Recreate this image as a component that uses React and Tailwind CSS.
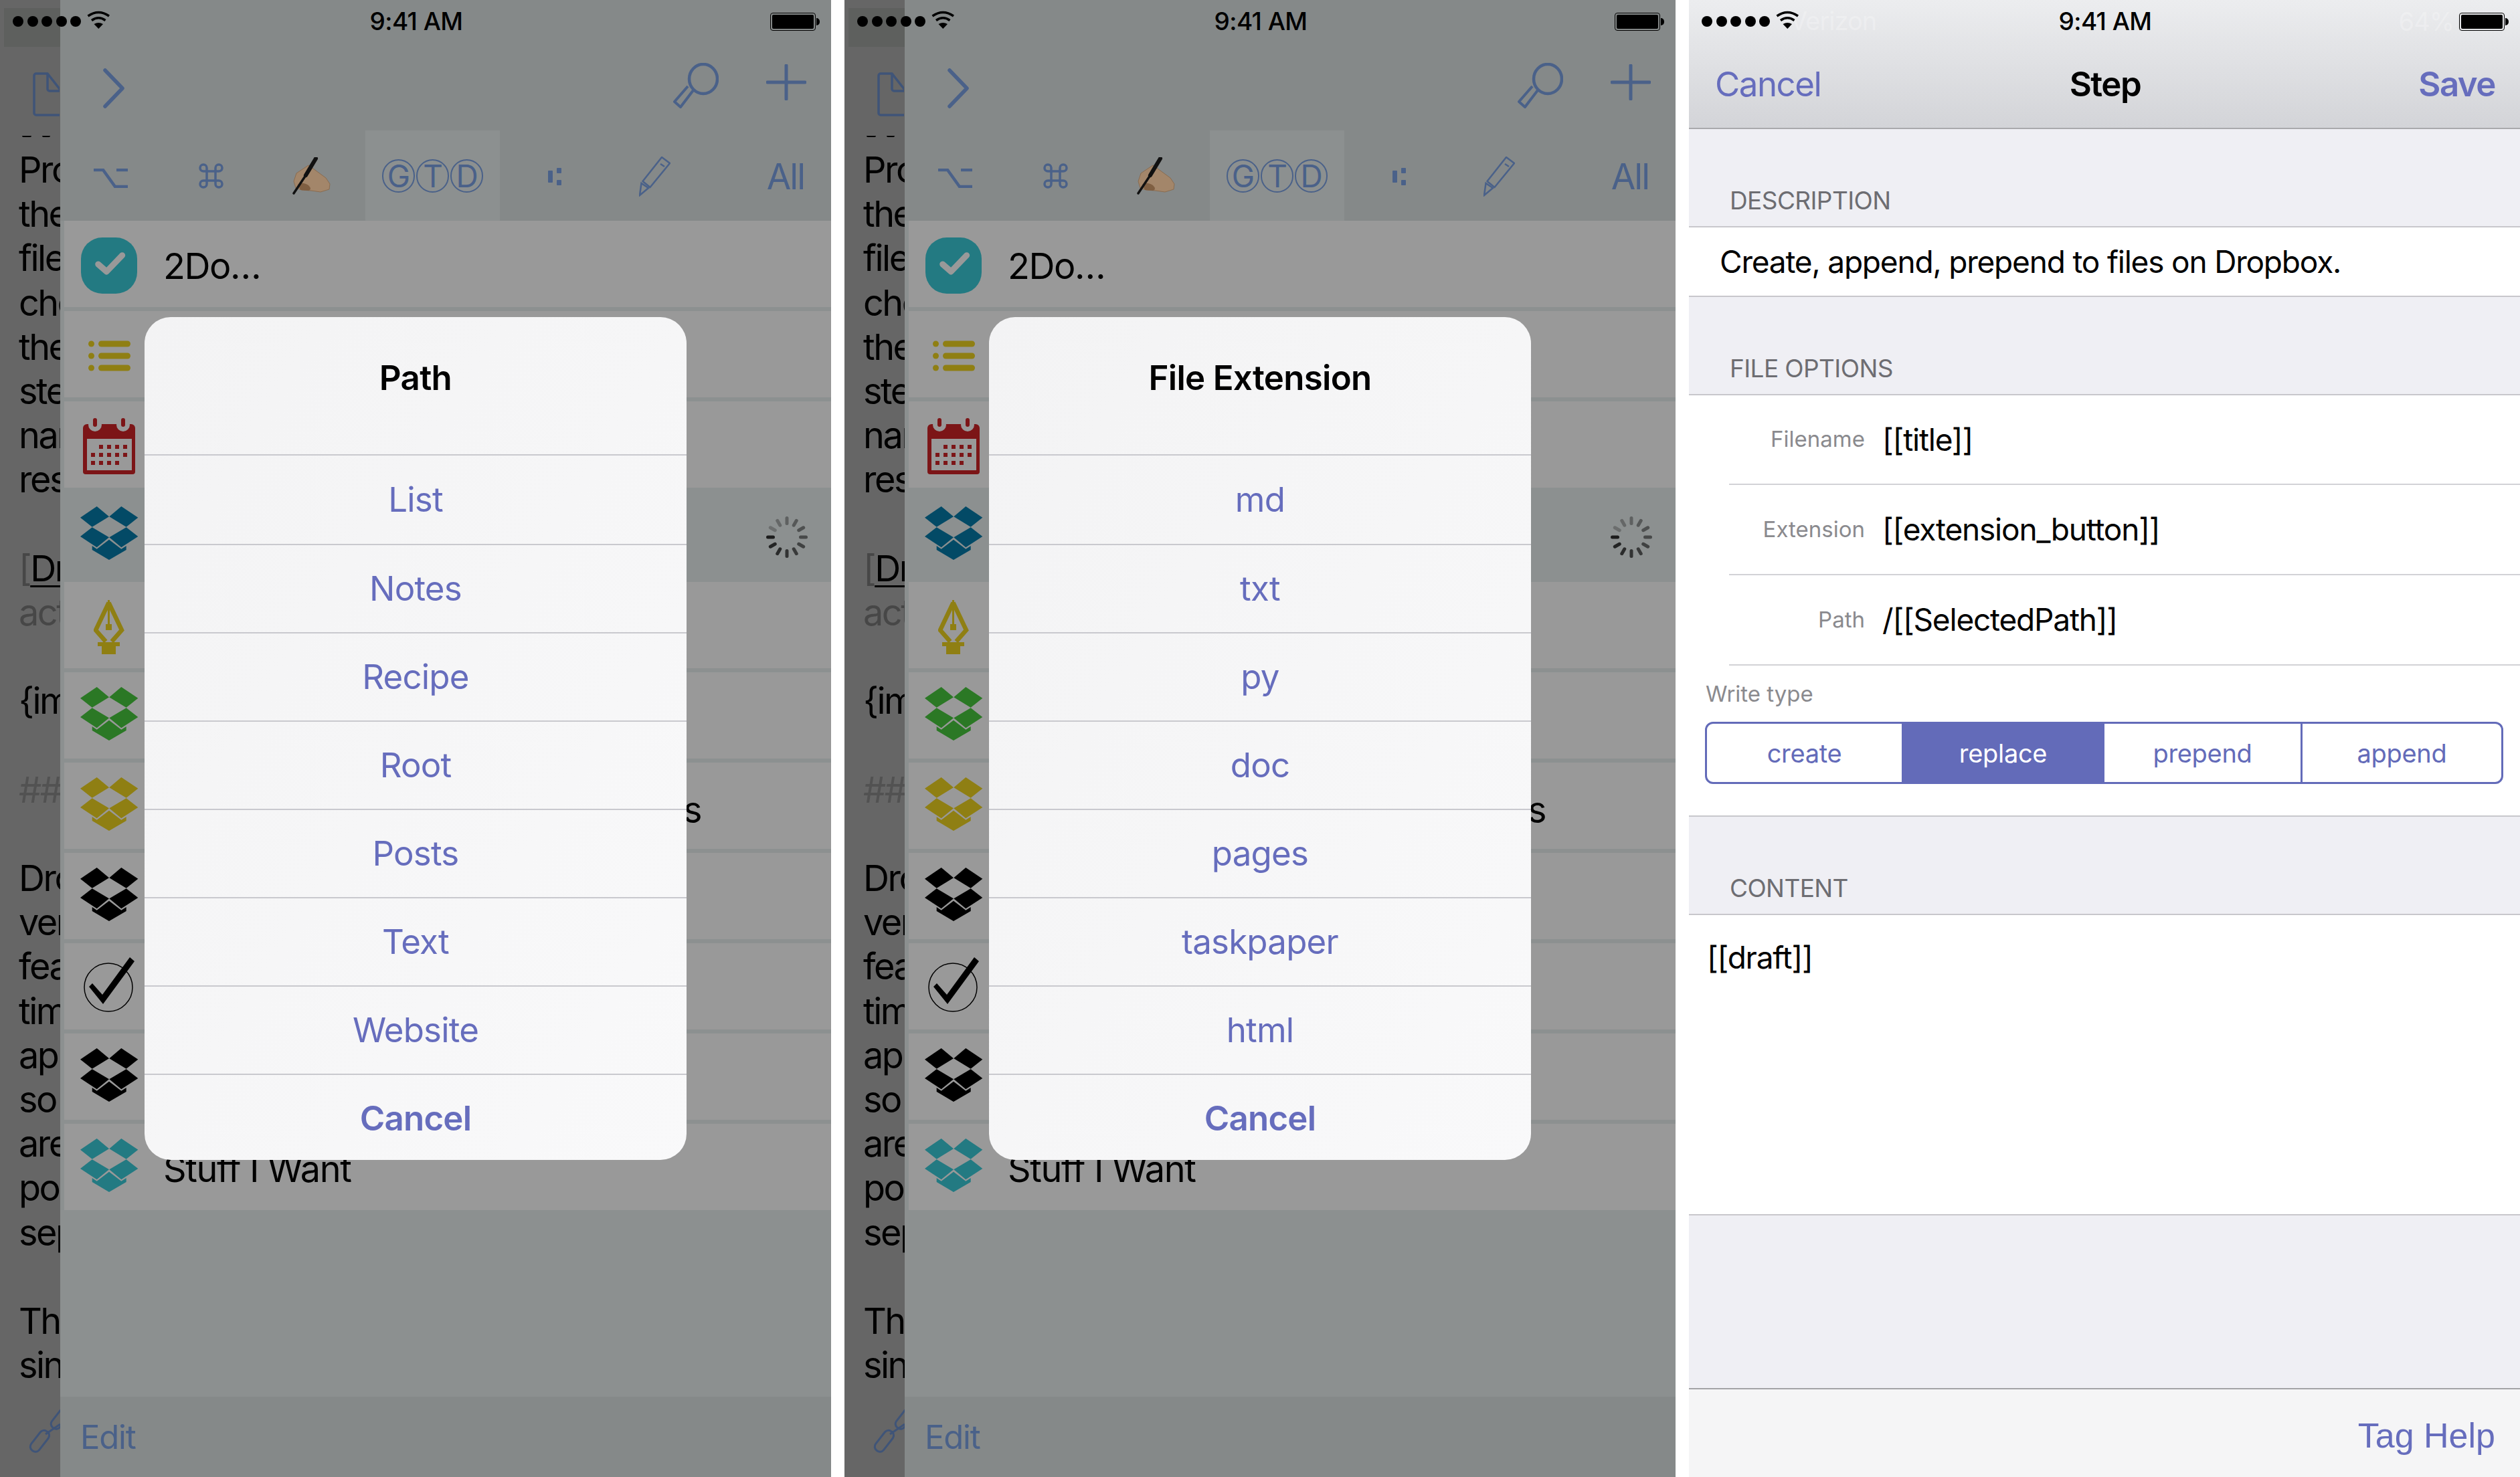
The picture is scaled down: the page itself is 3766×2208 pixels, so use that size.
import React from "react";

const teal = "#237a82";
const gold = "#8f7f13";
const navBlue = "#4a6189";

const sideLines = [
  "Pro", "the", "file", "che", "the", "ste", "nam", "res", "",
  "[Dr", "act", "", "{im", "", "##", "", "Dro", "ver",
  "fea", "tim", "app", "so", "are", "pos", "sep", "", "Th", "sin",
];

const Dots = () => (
  <div className="flex gap-[5.5px]">
    {[0, 1, 2, 3, 4].map((i) => (
      <span key={i} className="w-[16px] h-[16px] rounded-full bg-black" />
    ))}
  </div>
);

const Wifi = () => (
  <svg width="35" height="27" viewBox="0 0 35 27" className="ml-[9px] -mt-[6px] relative">
    <path d="M1.5 8 Q17.3 -3 33 8" fill="none" stroke="#000" strokeWidth="3.5" />
    <path d="M7 14.5 Q17.3 7 27.5 14.5" fill="none" stroke="#000" strokeWidth="3.5" />
    <path d="M10.5 20 Q17.3 16 24 20 L17.3 27 Z" fill="#000" />
  </svg>
);

const Battery = () => (
  <div className="flex items-center">
    <div className="w-[68px] h-[27px] border border-black rounded-[4px] p-[2px]">
      <div className="w-full h-full bg-black rounded-[2px]" />
    </div>
    <div className="w-[5px] h-[11px] bg-black rounded-r-full ml-[1px]" />
  </div>
);

const StatusBar = ({ ghost }) => (
  <div className="absolute top-0 left-0 right-0 h-[64px] flex items-center justify-between pl-[19px] pr-[17px]">
    <div className="flex items-center w-[300px]">
      <Dots />
      <Wifi />
      {ghost && (
        <span className="text-[38px] tracking-[-1px] text-white/25 -ml-[14px] -mt-[2px]">Verizon</span>
      )}
    </div>
    <span className="text-[37px] font-medium tracking-[-0.6px] text-black">9:41 AM</span>
    <div className="flex items-center justify-end w-[300px] gap-[8px]">
      {ghost && <span className="text-[38px] tracking-[-1px] text-white/25">64%</span>}
      <Battery />
    </div>
  </div>
);

const FileIcon = () => (
  <svg width="40" height="66" viewBox="0 0 40 66" className="block ml-[49px]">
    <path
      d="M44 64 H5 a3 3 0 0 1 -3 -3 V5 a3 3 0 0 1 3 -3 H22 L44 30 M22 2 V25 a3 3 0 0 0 3 3 H44"
      fill="none"
      stroke="#3f5478"
      strokeWidth="3.5"
    />
  </svg>
);

const LinkIcon = () => (
  <svg width="50" height="66" viewBox="0 0 50 66" className="block ml-[40px] mt-auto mb-[35px] shrink-0">
    <g fill="none" stroke="#3f5478" strokeWidth="3">
      <rect x="-7" y="-18" width="15" height="36" rx="7" transform="translate(19 47) rotate(38)" />
      <path d="M28 37 L50 22" />
      <rect x="-7" y="-18" width="15" height="36" rx="7" transform="translate(50 13) rotate(38)" />
    </g>
  </svg>
);

const Sidebar = () => (
  <div className="w-[90px] shrink-0 h-full bg-[#666666] flex flex-col overflow-hidden relative">
    <div className="absolute left-[6px] top-[12px] w-[84px] h-[58px] bg-[#5e605e]" />
    <div className="pt-[108px] h-[221px] shrink-0">
      <FileIcon />
      <div className="flex gap-[16px] ml-[33px] mt-[29px]">
        <span className="w-[14px] h-[2px] bg-black rounded-b-full" />
        <span className="w-[12px] h-[2px] bg-black rounded-b-full" />
      </div>
    </div>
    <div className="pl-[28px] text-[54px] leading-[66.2px] tracking-[-2.5px] whitespace-nowrap text-black">
      {sideLines.map((line, i) => {
        if (i === 9)
          return (
            <div key={i} className="h-[66.2px] text-[#474747]">
              [<span className="text-black underline decoration-[3px] underline-offset-[6px]">Dr</span>
            </div>
          );
        const grey = i === 10 ? "text-[#474747]" : i === 14 ? "text-[#525252]" : "";
        return (
          <div key={i} className={"h-[66.2px] " + grey}>
            {line}
          </div>
        );
      })}
    </div>
    <LinkIcon />
  </div>
);

const Dropbox = ({ color }) => (
  <svg width="87" height="80" viewBox="0 0 87 80" fill={color} className="-mt-[5px]">
    <path d="M0 16.7 L24.7 0 L43 15.3 L17.7 30.7 Z" />
    <path d="M43.3 15.3 L61.3 0 L86.3 16.7 L68.7 30.7 Z" />
    <path d="M17.7 31.3 L43 46.3 L24.7 61.3 L0 45 Z" />
    <path d="M68.7 31.3 L86.3 45 L61.3 61.3 L43.3 46.3 Z" />
    <path d="M43 49.7 L61.3 63.7 L68.7 59 V65 L43 80 L17.7 65 V59 L24.7 63.7 Z" />
  </svg>
);

const TwoDo = () => (
  <div className="w-[84px] h-[84px] mt-[5px] rounded-[32px] bg-[#237a82] flex items-center justify-center">
    <svg width="84" height="84" viewBox="0 0 84 84">
      <path d="M25.7 40 L38.3 51 L61.7 26.7" fill="none" stroke="#999" strokeWidth="9" strokeLinejoin="round" strokeLinecap="round" />
    </svg>
  </div>
);

const ListIcon = () => (
  <svg width="63" height="46" viewBox="0 0 63 46" fill={gold} className="mt-[5px]">
    <circle cx="4.5" cy="5" r="4.5" />
    <circle cx="4.5" cy="23" r="4.5" />
    <circle cx="4.5" cy="41" r="4.5" />
    <rect x="15" y="0.5" width="48" height="9" rx="4.5" />
    <rect x="15" y="18.5" width="48" height="9" rx="4.5" />
    <rect x="15" y="36.5" width="48" height="9" rx="4.5" />
  </svg>
);

const Calendar = () => {
  const cells = [
    [27, 43], [39, 43], [51, 43], [63, 43],
    [15, 55], [27, 55], [39, 55], [51, 55], [63, 55],
    [15, 67], [27, 67], [39, 67], [51, 67],
  ];
  return (
    <svg width="78" height="84" viewBox="0 0 78 84" className="mt-[5px]">
      <path d="M0 15 a6 6 0 0 1 6 -6 H72 a6 6 0 0 1 6 6 V80 a4 4 0 0 1 -4 4 H4 a4 4 0 0 1 -4 -4 Z" fill="#7c1517" />
      <circle cx="18" cy="10" r="10" fill="#999" />
      <circle cx="60" cy="10" r="10" fill="#999" />
      <rect x="15" y="0" width="6" height="13" rx="3" fill="#7c1517" />
      <rect x="57" y="0" width="6" height="13" rx="3" fill="#7c1517" />
      <rect x="6" y="31" width="67" height="47" fill="#999" />
      {cells.map(([x, y]) => (
        <rect key={x + "-" + y} x={x - 3} y={y - 3} width="6" height="6" fill="#7c1517" />
      ))}
    </svg>
  );
};

const Pen = () => (
  <svg width="46" height="82" viewBox="0 0 46 82" fill={gold} className="mt-[6px]">
    <path d="M22.5 4 L42 45 L27 62 M22.5 4 L3 45 L18 62" fill="none" stroke={gold} strokeWidth="6.5" />
    <rect x="21" y="0" width="3" height="37" />
    <rect x="18" y="36" width="9" height="9" />
    <rect x="6" y="63" width="33" height="6" />
    <rect x="12" y="69" width="21" height="12" />
  </svg>
);

const CheckCircle = () => (
  <svg width="78" height="84" viewBox="0 0 78 84" className="-mt-[5px]">
    <circle cx="38" cy="46" r="36" fill="none" stroke="#000" strokeWidth="1.5" />
    <path d="M9 45 L14 40 L29 57 L70 1 L77 7 L30 71 Z" fill="#000" />
  </svg>
);

const Spinner = () => (
  <svg width="66" height="66" viewBox="-33 -33 66 66">
    {Array.from({ length: 12 }).map((_, i) => (
      <rect
        key={i}
        x="-2.5"
        y="-31"
        width="5"
        height="13"
        rx="2.5"
        fill="#1c1c1c"
        opacity={1 - i * 0.065}
        transform={`rotate(${-90 - i * 30})`}
      />
    ))}
  </svg>
);

const rows = [
  { icon: <TwoDo />, title: "2Do…" },
  { icon: <ListIcon /> },
  { icon: <Calendar /> },
  { icon: <Dropbox color="#034a66" />, selected: true, spinner: true },
  { icon: <Pen /> },
  { icon: <Dropbox color="#2b7825" /> },
  { icon: <Dropbox color={gold} />, hidden: "Dropbox Posts" },
  { icon: <Dropbox color="#000" /> },
  { icon: <CheckCircle /> },
  { icon: <Dropbox color="#000" /> },
  { icon: <Dropbox color={teal} />, title: "Stuff I Want" },
];

const ListRow = ({ row }) => (
  <div className={"h-[129px] mb-[6px] flex items-center relative " + (row.selected ? "" : "bg-[#999999]")}>
    <div className="w-[134px] shrink-0 flex justify-center">{row.icon}</div>
    {row.title && (
      <span className="pl-[14px] mt-[5px] text-[54px] tracking-[-1.4px] text-black">{row.title}</span>
    )}
    {row.hidden && (
      <span className="w-[818px] text-right text-[54px] tracking-[-1.4px] text-black mt-[12px]">{row.hidden}</span>
    )}
    {row.spinner && (
      <div className="absolute right-[33px] top-[35px]">
        <Spinner />
      </div>
    )}
  </div>
);

const Chevron = () => (
  <svg width="36" height="60" viewBox="0 0 36 60" className="block">
    <path d="M5 3 L31 30 L5 57" fill="none" stroke={navBlue} strokeWidth="5.5" strokeLinecap="round" strokeLinejoin="round" />
  </svg>
);

const Magnifier = () => (
  <svg width="68" height="68" viewBox="0 0 68 68" className="block">
    <ellipse cx="45" cy="24" rx="21" ry="22" fill="none" stroke={navBlue} strokeWidth="4.5" />
    <path d="M30 41 L11 66 L2 58 L22 35" fill="none" stroke={navBlue} strokeWidth="4" strokeLinejoin="round" />
  </svg>
);

const Plus = () => (
  <svg width="60" height="54" viewBox="0 0 60 54" className="block">
    <path d="M30 2 V52 M2 27 H58" fill="none" stroke={navBlue} strokeWidth="5" strokeLinecap="round" />
  </svg>
);

const OptionKey = () => (
  <svg width="51" height="29" viewBox="0 0 51 29">
    <path d="M0 2 H14 L32 27 H51 M34 2 H51" fill="none" stroke={navBlue} strokeWidth="4.5" />
  </svg>
);

const CommandKey = () => (
  <svg width="37" height="38" viewBox="0 0 37 38">
    <path
      d="M12 12 H7 a5 5 0 1 1 5 -5 V31 a5 5 0 1 1 -5 -5 H30 a5 5 0 1 1 -5 5 V7 a5 5 0 1 1 5 5 H12"
      fill="none"
      stroke={navBlue}
      strokeWidth="3.5"
    />
  </svg>
);

const Hand = () => (
  <svg width="57" height="56" viewBox="0 0 57 56">
    <path d="M6 24 L24 12 L35 20 L50 31 L56 40 L55 48 L42 52 L28 50 L14 49 L5 46 L2 36 Z" fill="#a3866a" stroke="#8a6c50" strokeWidth="1" />
    <path d="M8 41 Q14 36 24 42 Q30 48 24 50 L12 49 Z" fill="#7f5f42" />
    <path d="M35 2 L20 27" stroke="#111" strokeWidth="6" strokeLinecap="round" />
    <path d="M22 24 L2 54" stroke="#111" strokeWidth="3.5" strokeLinecap="round" />
  </svg>
);

const GtdBadge = ({ letter }) => (
  <div className="w-[49px] h-[50px] rounded-full border-2 border-[#4a6189] flex items-center justify-center text-[46px] leading-none tracking-[-1px] text-[#4a6189]">
    {letter}
  </div>
);

const ColonIcon = () => (
  <svg width="20" height="26" viewBox="0 0 20 26" fill={navBlue}>
    <rect x="0" y="4" width="7" height="18" rx="1" />
    <rect x="13" y="0" width="7" height="8" rx="1" />
    <rect x="13" y="18" width="7" height="8" rx="1" />
  </svg>
);

const Pencil = () => (
  <svg width="47" height="60" viewBox="0 0 47 60">
    <path d="M34 1 L46 10 L16.5 46 L5.5 37 Z M32 11 L38 15" fill="none" stroke={navBlue} strokeWidth="2.5" strokeLinejoin="round" />
    <path d="M1 58 L3.5 40 L14 47 Z" fill="none" stroke={navBlue} strokeWidth="2.5" />
  </svg>
);

const TopNav = () => (
  <div className="bg-[#858989] shrink-0">
    <div className="h-[195px] flex items-start justify-between">
      <div className="pl-[62px] pt-[102px]">
        <Chevron />
      </div>
      <div className="flex items-start pt-[94px] pr-[37px] gap-[71px]">
        <Magnifier />
        <div className="pt-[2px]">
          <Plus />
        </div>
      </div>
    </div>
    <div className="h-[135px] flex items-center">
      <div className="w-[150px] flex justify-center pt-[7px]">
        <OptionKey />
      </div>
      <div className="w-[150px] flex justify-center">
        <CommandKey />
      </div>
      <div className="w-[156px] flex justify-center pr-[6px]">
        <Hand />
      </div>
      <div className="w-[201px] h-full bg-[#8c9090] flex items-center justify-center gap-[2px]">
        <GtdBadge letter="G" />
        <GtdBadge letter="T" />
        <GtdBadge letter="D" />
      </div>
      <div className="w-[163px] flex justify-center pt-[2px]">
        <ColonIcon />
      </div>
      <div className="w-[136px] flex justify-center pt-[2px]">
        <Pencil />
      </div>
      <div className="w-[196px] flex justify-end pr-[40px] pt-[3px] text-[53px] leading-none tracking-[-2px] text-[#4a6189]">
        All
      </div>
    </div>
  </div>
);

const Dialog = ({ title, items }) => (
  <div className="absolute left-[216px] top-[474px] w-[810px] rounded-[39px] overflow-hidden bg-gradient-to-br from-[#f3f3f4] to-[#f9f9fa]">
    <div className="h-[205px] pt-[57px] text-center text-[51px] leading-[68px] font-semibold tracking-[-0.7px] text-black">
      {title}
    </div>
    {items.map((item, i) => (
      <div
        key={item}
        className={
          "border-t-2 border-[#c9c9ce] flex items-center justify-center text-[51px] tracking-[-0.8px] text-[#666dbd] " +
          (i === 0 ? "h-[134px]" : "h-[132px]")
        }
      >
        {item}
      </div>
    ))}
    <div className="h-[129px] pt-[3px] border-t-2 border-[#c9c9ce] flex items-center justify-center text-[51px] font-semibold tracking-[-0.8px] text-[#666dbd]">
      Cancel
    </div>
  </div>
);

const ListPanel = ({ title, items }) => (
  <div className="w-[1242px] h-[2208px] shrink-0 relative flex overflow-hidden">
    <Sidebar />
    <div className="flex-1 flex flex-col">
      <TopNav />
      <div className="flex-1 bg-[#8c9090] pl-[6px]">
        {rows.map((row, i) => (
          <ListRow key={i} row={row} />
        ))}
      </div>
      <div className="h-[120px] shrink-0 bg-[#858989] pl-[30px] pt-[31px] text-[49px] leading-[60px] tracking-[-1.2px] text-[#4a6189]">
        Edit
      </div>
    </div>
    <StatusBar />
    <Dialog title={title} items={items} />
  </div>
);

const SectionHeader = ({ label, height }) => (
  <div className={"bg-[#efeff4] flex items-end pl-[61px] pb-[16px] border-b-2 border-[#c8c7cc] text-[37px] leading-[44px] tracking-[-0.6px] text-[#6d6d72] " + height}>
    {label}
  </div>
);

const Field = ({ label, value, height }) => (
  <div className={"ml-[60px] flex items-center border-b-2 border-[#d2d2d6] " + height}>
    <span className="w-[203px] text-right text-[33px] text-[#8a8a8e]">{label}</span>
    <span className="ml-[26px] text-[46px] tracking-[-1.2px] text-black">{value}</span>
  </div>
);

const segments = [
  { label: "create", width: "w-[291px]" },
  { label: "replace", width: "w-[303px]", active: true },
  { label: "prepend", width: "w-[296px]", divider: true },
  { label: "append", width: "flex-1" },
];

const StepPanel = () => (
  <div className="w-[1242px] h-[2208px] shrink-0 relative flex flex-col bg-white">
    <div className="h-[193px] shrink-0 bg-gradient-to-b from-[#ecedef] to-[#d3d4d8] border-b-2 border-[#a9a9ac] flex items-start pl-[39px] pr-[37px] pt-[92px] text-[51px] leading-[68px]">
      <span className="flex-1 tracking-[-1.5px] text-[#666dbd]">Cancel</span>
      <span className="font-semibold tracking-[-1.5px] text-black">Step</span>
      <span className="flex-1 text-right font-semibold tracking-[-1.5px] text-[#666dbd]">Save</span>
    </div>
    <SectionHeader label="DESCRIPTION" height="h-[147px]" />
    <div className="h-[104px] shrink-0 flex items-center pl-[46px] border-b-2 border-[#c8c7cc] text-[46px] tracking-[-1.2px] text-black">
      Create, append, prepend to files on Dropbox.
    </div>
    <SectionHeader label="FILE OPTIONS" height="h-[147px]" />
    <Field label="Filename" value="[[title]]" height="h-[134px]" />
    <Field label="Extension" value="[[extension_button]]" height="h-[135px]" />
    <Field label="Path" value="/[[SelectedPath]]" height="h-[135px]" />
    <div className="h-[226px] shrink-0 border-b-2 border-[#c8c7cc] pl-[25px]">
      <div className="pt-[20px] h-[84px] text-[33px] leading-[44px] text-[#8a8a8e]">Write type</div>
      <div className="w-[1193px] h-[93px] border-[3px] border-[#636bb9] rounded-[12px] overflow-hidden flex text-[38px] tracking-[-0.3px] -ml-[1px]">
        {segments.map((s) => (
          <div
            key={s.label}
            className={
              "flex items-center justify-center pt-[2px] " +
              s.width +
              (s.active ? " bg-[#636bb9] text-white" : " text-[#636bb9]") +
              (s.divider ? " border-r-[3px] border-[#636bb9]" : "")
            }
          >
            {s.label}
          </div>
        ))}
      </div>
    </div>
    <SectionHeader label="CONTENT" height="h-[147px]" />
    <div className="h-[449px] shrink-0 border-b-2 border-[#c8c7cc] pl-[27px] pt-[33px] text-[46px] leading-[60px] tracking-[-1.2px] text-black">
      [[draft]]
    </div>
    <div className="flex-1 bg-[#efeff4]" />
    <div className="h-[133px] shrink-0 bg-[#f5f5f6] border-t-2 border-[#a3a3a6] flex justify-end pt-[36px] pr-[37px] font-['Liberation_Sans',sans-serif] text-[52px] leading-[66px] text-[#666dbd]">
      Tag Help
    </div>
    <StatusBar ghost />
  </div>
);

const App = () => (
  <div className="w-[3766px] h-[2208px] flex gap-[20px] bg-white font-['Inter',sans-serif]">
    <ListPanel title="Path" items={["List", "Notes", "Recipe", "Root", "Posts", "Text", "Website"]} />
    <ListPanel title="File Extension" items={["md", "txt", "py", "doc", "pages", "taskpaper", "html"]} />
    <StepPanel />
  </div>
);

export default App;
